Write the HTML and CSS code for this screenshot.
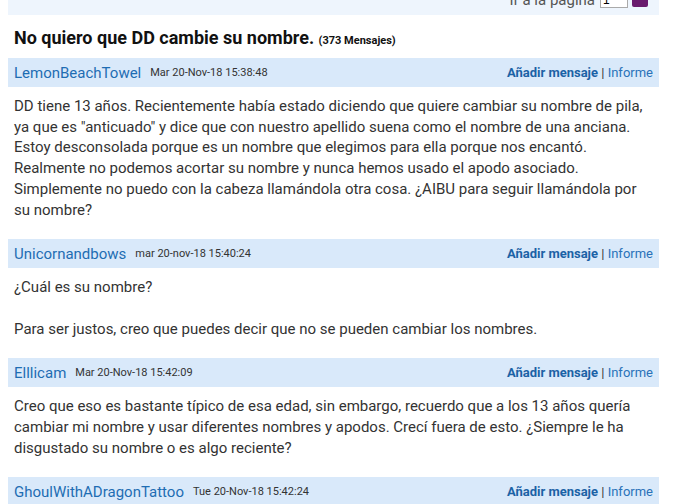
FILE: index.html
```html
<!DOCTYPE html>
<html lang="es">
<head>
  <meta charset="UTF-8">
  <title>No quiero que DD cambie su nombre.</title>
  <link rel="stylesheet" href="styles.css">
</head>
<body>
  <div id="thread">
    <!-- Page jump bar, partly scrolled out of view -->
    <div class="pager">
      <span class="pager-label">Ir a la página</span>
      <input class="pager-input" type="text" value="1">
      <span class="pager-go"></span>
    </div>

    <h1 class="thread-title">No quiero que DD cambie su nombre. <span class="count">(373 Mensajes)</span></h1>

    <div class="post">
      <div class="post-head">
        <a class="author" href="#">LemonBeachTowel</a>
        <span class="date">Mar 20-Nov-18 15:38:48</span>
        <span class="actions"><a class="reply" href="#">Añadir mensaje</a> | <a href="#">Informe</a></span>
      </div>
      <div class="post-body">
        DD tiene 13 años. Recientemente había estado diciendo que quiere cambiar su nombre de pila, ya que es "anticuado" y dice que con nuestro apellido suena como el nombre de una anciana. Estoy desconsolada porque es un nombre que elegimos para ella porque nos encantó. Realmente no podemos acortar su nombre y nunca hemos usado el apodo asociado. Simplemente no puedo con la cabeza llamándola otra cosa. ¿AIBU para seguir llamándola por su nombre?
      </div>
    </div>

    <div class="post">
      <div class="post-head">
        <a class="author" href="#">Unicornandbows</a>
        <span class="date">mar 20-nov-18 15:40:24</span>
        <span class="actions"><a class="reply" href="#">Añadir mensaje</a> | <a href="#">Informe</a></span>
      </div>
      <div class="post-body">
        ¿Cuál es su nombre?<br><br>
        Para ser justos, creo que puedes decir que no se pueden cambiar los nombres.
      </div>
    </div>

    <div class="post">
      <div class="post-head">
        <a class="author" href="#">Elllicam</a>
        <span class="date">Mar 20-Nov-18 15:42:09</span>
        <span class="actions"><a class="reply" href="#">Añadir mensaje</a> | <a href="#">Informe</a></span>
      </div>
      <div class="post-body">
        Creo que eso es bastante típico de esa edad, sin embargo, recuerdo que a los 13 años quería cambiar mi nombre y usar diferentes nombres y apodos. Crecí fuera de esto. ¿Siempre le ha disgustado su nombre o es algo reciente?
      </div>
    </div>

    <div class="post">
      <div class="post-head">
        <a class="author" href="#">GhoulWithADragonTattoo</a>
        <span class="date">Tue 20-Nov-18 15:42:24</span>
        <span class="actions"><a class="reply" href="#">Añadir mensaje</a> | <a href="#">Informe</a></span>
      </div>
    </div>
  </div>
</body>
</html>
```

FILE: styles.css
```css
body {
  margin: 0;
  padding: 0 8px;
  background: #fff;
  color: #333;
  font-family: Roboto, "Noto Sans", Arial, sans-serif;
  overflow: hidden;
}
#thread {
  width: 651px;
}
/* Page jump bar (scrolled halfway off the top) */
.pager {
  display: flex;
  justify-content: flex-end;
  align-items: center;
  gap: 4px;
  height: 30px;
  margin-top: -15px;
  padding-right: 11px;
  background: #eef5fd;
  font-size: 15px;
  color: #555;
}
.pager-label {
  margin-right: 1px;
}
.pager-input {
  width: 22px;
  height: 14px;
  padding: 0 2px;
  border: 1px solid #aaa;
  font-size: 12px;
}
.pager-go {
  width: 16px;
  height: 14px;
  background: #6a1b6e;
  border-radius: 2px;
}
.thread-title {
  margin: 0;
  padding: 12px 6px 10px;
  font-size: 18px;
  font-weight: bold;
  color: #111;
}
.count {
  font-size: 11px;
  font-weight: bold;
}
.post-head {
  display: flex;
  align-items: center;
  height: 29px;
  padding: 0 6px;
  background: #d9e9fa;
}
.author {
  font-size: 15px;
  color: #1e6db3;
  text-decoration: none;
}
.date {
  margin-left: 9px;
  font-size: 11px;
  color: #333;
}
.actions {
  margin-left: auto;
  font-size: 13px;
  color: #333;
}
.actions a {
  color: #2a72b9;
  text-decoration: none;
}
.actions .reply {
  font-weight: bold;
  color: #1b62a6;
}
.post-body {
  padding: 9px 6px 19px;
  font-size: 15px;
  line-height: 20.7px;
  color: #333;
}
```
